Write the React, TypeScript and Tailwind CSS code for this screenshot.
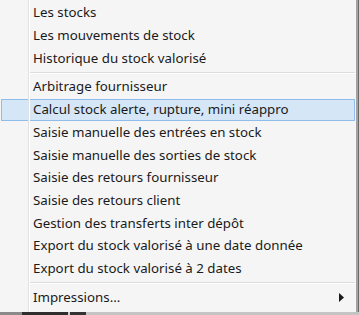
const groups: { label: string; active?: boolean; sub?: boolean }[][] = [
    [
        { label: 'Les stocks' },
        { label: 'Les mouvements de stock' },
        { label: 'Historique du stock valorisé' },
    ],
    [
        { label: 'Arbitrage fournisseur' },
        { label: 'Calcul stock alerte, rupture, mini réappro', active: true },
        { label: 'Saisie manuelle des entrées en stock' },
        { label: 'Saisie manuelle des sorties de stock' },
        { label: 'Saisie des retours fournisseur' },
        { label: 'Saisie des retours client' },
        { label: 'Gestion des transferts inter dépôt' },
        { label: 'Export du stock valorisé à une date donnée' },
        { label: 'Export du stock valorisé à 2 dates' },
    ],
    [{ label: 'Impressions...', sub: true }],
];

function MenuRow({ label, active, sub }: { label: string; active?: boolean; sub?: boolean }) {
    return (
        <div
            className={`h-[22.7px] flex items-center pl-[31px] pr-[10px] mx-[1px] border ${
                active ? 'bg-[#d5e6f7] border-[#8fbdeb]' : 'border-transparent'
            }`}
        >
            <span className="flex-1 whitespace-nowrap">{label}</span>
            {sub && (
                <svg width="5" height="9" viewBox="0 0 5 9">
                    <path d="M0 0 L5 4.5 L0 9 Z" fill="#1a1a1a" />
                </svg>
            )}
        </div>
    );
}

export default function App() {
    return (
        <div
            className="w-[359px] h-[315px] flex flex-col bg-[#f0f0f0] text-[13.3px] text-[#1a1a1a] overflow-hidden"
            style={{ fontFamily: '"Noto Sans", "Open Sans", sans-serif' }}
        >
            <div className="flex h-[312px]">
                <div className="relative w-[356px] bg-[#f5f5f5] pt-[2px]">
                    {groups.map((group, gi) => (
                        <div key={gi}>
                            {gi > 0 && (
                                <div className="h-[6px] pt-[2px]">
                                    <div className="ml-[29px] mr-[1px] border-t border-b border-t-[#dcdcdc] border-b-white" />
                                </div>
                            )}
                            {group.map((item) => (
                                <MenuRow key={item.label} {...item} />
                            ))}
                        </div>
                    ))}
                    {/* gutter line */}
                    <div className="absolute left-[28px] top-0 bottom-0 w-[2px] border-l border-l-[#e2e2e2] border-r border-r-white pointer-events-none" />
                </div>
                <div className="w-[3px] flex">
                    <div className="w-[2px] bg-[#a3a3a3]" />
                    <div className="w-[1px] bg-[#6a6a6a]" />
                </div>
            </div>
            <div className="flex h-[3px]">
                <div className="w-[22px] bg-[#8a8a8a]" />
                <div className="w-[46px] bg-[#2e2e2e]" />
                <div className="w-[2px] bg-[#cfcfcf]" />
                <div className="w-[16px] bg-[#333333]" />
                <div className="flex-1 bg-[#c4c4c4]" />
            </div>
        </div>
    );
}
